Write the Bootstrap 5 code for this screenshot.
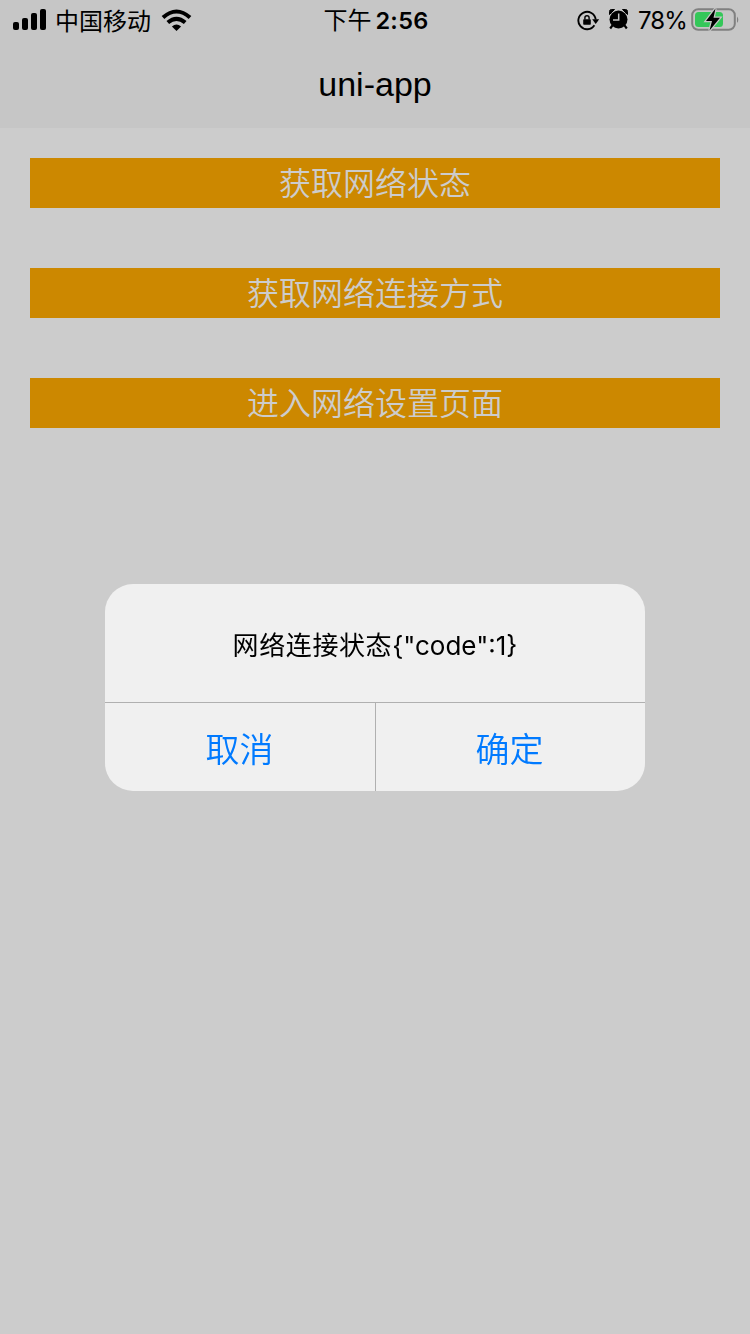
<!DOCTYPE html>
<html lang="zh-CN">
<head>
<meta charset="utf-8">
<meta name="viewport" content="width=device-width, initial-scale=1">
<title>uni-app</title>
<link href="https://cdn.jsdelivr.net/npm/bootstrap@5.3.0/dist/css/bootstrap.min.css" rel="stylesheet">
<style>
  body { background: #ccc; color: #000; font-family: Inter, "Noto Sans CJK SC", sans-serif; min-height: 1334px; overflow: hidden; }
  .app-header { height: 128px; background: #c6c6c6; }
  .status-bar { height: 40px; font-size: 24px; line-height: 42px; white-space: nowrap; display: grid; grid-template-columns: 1fr auto 1fr; padding: 0 11px 0 13px; }
  .status-bar svg { display: block; flex: none; }
  .status-bar > div { height: 40px; }
  .carrier { margin: 0 10px 0 8px; padding-top: 3px; }
  .clock { font-weight: 600; font-size: 23.500px; letter-spacing: .3px; }
  .clock .period { font-size: 24px; font-weight: 400; margin-right: 4px; letter-spacing: 0; }
  .pct { letter-spacing: -.9px; margin-left: 9px; padding-top: 2px; }
  .app-title { height: 88px; font: 34px/88px "Liberation Sans", sans-serif; }
  .actions { padding: 30px; gap: 60px; }
  .btn-action { --bs-btn-border-radius: 0; background: #cc8800; color: #ccc; height: 50px; padding: 0; border: 0; font: 350 32px/47px "Noto Sans CJK SC", sans-serif; display: block; }
  .btn-action span { display: block; height: 50px; }
  .dialog-layer { z-index: 10; }
  .dialog-box { width: 540px; height: 207px; margin-top: 41px; background: #f0f0f0; border-radius: 28px; overflow: hidden; }
  .dialog-text { height: 118px; padding-top: 4px; font-size: 26px; }
  .dialog-text .cjk { letter-spacing: .6px; }
  .dialog-foot { height: 89px; border-top: 1px solid #b0b0b0; }
  .btn-dialog { color: #007aff; border: 0; border-radius: 0; padding: 0 1px 0 0; font: 350 34px/87px "Noto Sans CJK SC", sans-serif; }
  .btn-dialog + .btn-dialog { border-left: 1px solid #b0b0b0; padding-right: 2px; }
</style>
</head>
<body>
<header class="app-header">
  <div class="status-bar">
    <div class="d-flex align-items-center">
      <svg width="34" height="40" viewBox="0 0 34 40"><rect x="0" y="22" width="6" height="8" rx="2"/><rect x="9" y="18" width="6" height="12" rx="2"/><rect x="18" y="13" width="6" height="17" rx="2"/><rect x="27" y="9" width="6" height="21" rx="2"/></svg>
      <span class="carrier">中国移动</span>
      <svg width="32" height="40" viewBox="0 0 32 40"><g fill="none" stroke="#000" stroke-width="4"><path d="M2 17.600Q15.500 5.400 29 17.600"/><path d="M6.800 22.600Q15.500 15 24.200 22.600"/></g><path d="M10.900 26.400Q15.500 22.500 20.100 26.400L15.500 31Z"/></svg>
    </div>
    <div class="clock"><span class="period">下午</span>2:56</div>
    <div class="d-flex align-items-center justify-content-end">
      <svg width="23" height="40" viewBox="0 0 23 40"><path d="M17.400 25.200A8.700 8.700 0 1 1 18.700 19.500" fill="none" stroke="#000" stroke-width="1.900"/><path d="M15.200 19.300h7l-3.500 4.700z"/><rect x="6.200" y="19.200" width="7.600" height="5.600" rx=".8"/><path d="M7.900 19.500v-1.700a2.100 2.100 0 0 1 4.200 0v1.700" fill="none" stroke="#000" stroke-width="1.400"/></svg>
      <svg class="ms-2" width="21" height="40" viewBox="0 0 21 40"><circle cx="10.500" cy="19.500" r="9"/><path d="M1.500 14.500v-3a2 2 0 0 1 2-2h3zM19.500 14.500v-3a2 2 0 0 0-2-2h-3z" stroke="#000"/><path d="M4.700 25.200 2.200 28.500M16.300 25.200l2.500 3.300" stroke="#000" stroke-width="2.200"/><path d="M10.700 13.500v6.500H5" fill="none" stroke="#c6c6c6" stroke-width="1.500"/></svg>
      <span class="pct">78%</span>
      <svg class="ms-1" width="48" height="40" viewBox="0 0 48 40"><rect x="1.200" y="9.200" width="42.600" height="20.600" rx="6" fill="none" stroke="#808080" stroke-width="2"/><path d="M46 16.500q2.600 3 0 6.500z" fill="#808080"/><rect x="4" y="12" width="28" height="15" rx="3.500" fill="#34c759"/><path d="M24.500 8.500 15 21h6L18.500 30.500 29 17.800h-6.500z" stroke="#c6c6c6" stroke-width="2.500" paint-order="stroke"/></svg>
    </div>
  </div>
  <div class="app-title text-center">uni-app</div>
</header>
<main class="actions d-flex flex-column">
  <button type="button" class="btn btn-action"><span>获取网络状态</span></button>
  <button type="button" class="btn btn-action"><span>获取网络连接方式</span></button>
  <button type="button" class="btn btn-action"><span>进入网络设置页面</span></button>
</main>
<div class="dialog-layer position-fixed top-0 start-0 w-100 h-100 d-flex align-items-center justify-content-center" role="dialog" aria-modal="true">
  <div class="dialog-box">
    <div class="dialog-text d-flex align-items-center justify-content-center"><span class="cjk">网络连接状态</span><span>{"code":1}</span></div>
    <div class="dialog-foot d-flex">
      <button type="button" class="btn btn-dialog flex-fill w-50">取消</button>
      <button type="button" class="btn btn-dialog flex-fill w-50">确定</button>
    </div>
  </div>
</div>
<script src="https://cdn.jsdelivr.net/npm/bootstrap@5.3.0/dist/js/bootstrap.bundle.min.js"></script>
</body>
</html>
